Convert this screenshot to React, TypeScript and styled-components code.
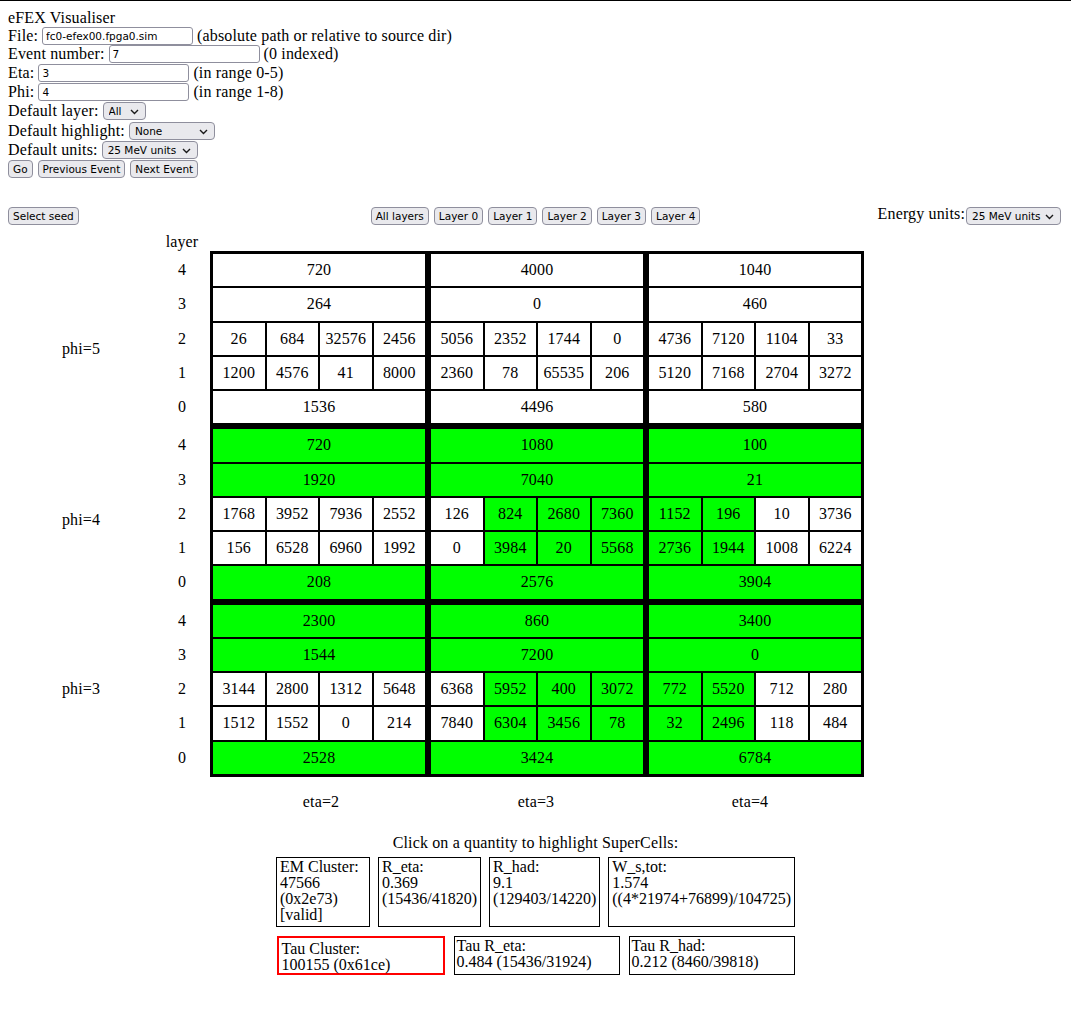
import React from 'react';
import styled, { createGlobalStyle } from 'styled-components';

const GlobalStyle = createGlobalStyle`
  html, body { margin: 0; padding: 0; background: #fff; }
  body {
    font-family: "Liberation Serif", "Times New Roman", serif;
    font-size: 16px;
    letter-spacing: 0.15px;
    color: #000;
  }
`;

const ui = `"DejaVu Sans", "Liberation Sans", sans-serif`;

const Page = styled.div`
  border-top: 1px solid #000;
  padding: 8px 8px 40px;
  width: 1071px;
  box-sizing: border-box;
`;

const Title = styled.div`
  height: 18px;
  line-height: 18px;
`;

const FormRow = styled.div<{ $h: number }>`
  display: flex;
  align-items: center;
  gap: 4px;
  height: ${(p) => p.$h}px;
  line-height: 18px;
  white-space: nowrap;
`;

const TextInput = styled.input`
  width: 151px;
  height: 18px;
  box-sizing: border-box;
  border: 1px solid #8f8f9d;
  border-radius: 3px;
  padding: 0 3px;
  font-family: ${ui};
  font-size: 10.5px;
  letter-spacing: 0;
  color: #000;
  background: #fff;
  outline: none;
`;

const SelectWrap = styled.span<{ $w: number }>`
  position: relative;
  display: inline-flex;
  align-items: center;
  width: ${(p) => p.$w}px;
  height: 18px;
  box-sizing: border-box;
  border: 1px solid #8f8f9d;
  border-radius: 4px;
  background: #e9e9ed;
`;

const NativeSelect = styled.select`
  appearance: none;
  -webkit-appearance: none;
  border: 0;
  background: transparent;
  width: 100%;
  height: 100%;
  padding: 0 0 0 5px;
  margin: 0;
  font-family: ${ui};
  font-size: 10.5px;
  letter-spacing: 0;
  color: #000;
  outline: none;
`;

const Chevron = styled.svg`
  position: absolute;
  right: 6px;
  top: 6px;
  pointer-events: none;
`;

const Button = styled.button`
  height: 18px;
  box-sizing: border-box;
  border: 1px solid #8f8f9d;
  border-radius: 4px;
  background: #e9e9ed;
  padding: 0 4px;
  margin: 0;
  font-family: ${ui};
  font-size: 10.5px;
  letter-spacing: 0;
  color: #000;
  line-height: 16px;
`;

const ButtonRow = styled.div`
  display: flex;
  align-items: center;
  gap: 5px;
  height: 20px;
`;

const Toolbar = styled.div`
  display: grid;
  grid-template-columns: 1fr auto 1fr;
  align-items: center;
  height: 18px;
  margin-top: 26px;
`;

const ToolGroup = styled.div<{ $align: 'start' | 'center' | 'end' }>`
  display: flex;
  align-items: center;
  gap: 5px;
  justify-self: ${(p) => p.$align};
  margin-right: ${(p) => (p.$align === 'end' ? '2px' : '0')};
`;

const UnitsLabel = styled.span`
  line-height: 18px;
  margin-right: -4px;
  margin-bottom: 4px;
`;

const Grid = styled.div`
  display: grid;
  grid-template-columns: 146px 56px max-content;
  margin-top: 10px;
`;

const HeadCell = styled.div`
  height: 18px;
  line-height: 18px;
  text-align: center;
`;

const SideColumn = styled.div`
  display: flex;
  flex-direction: column;
  gap: 6px;
  padding: 3px 0;
`;

const PhiSlot = styled.div`
  height: 169.25px;
  display: flex;
  align-items: center;
  justify-content: center;
`;

const PhiLabel = styled.span<{ $shift: number }>`
  margin-top: ${(p) => p.$shift * 2}px;
  line-height: 18px;
`;

const LayerBlock = styled.div`
  display: grid;
  grid-template-rows: repeat(5, 32.25px);
  row-gap: 2px;
`;

const LayerNum = styled.div`
  display: flex;
  align-items: center;
  justify-content: center;
`;

const Table = styled.div`
  display: grid;
  grid-template-columns: repeat(3, 212px);
  gap: 6px;
  padding: 3px;
  background: #000;
`;

const Block = styled.div`
  display: grid;
  grid-template-rows: repeat(5, 32.25px);
  row-gap: 2px;
`;

const CellRow = styled.div<{ $n: number }>`
  display: grid;
  grid-template-columns: repeat(${(p) => p.$n}, 1fr);
  column-gap: 2px;
`;

const Cell = styled.div<{ $on: boolean }>`
  background: ${(p) => (p.$on ? '#00ff00' : '#ffffff')};
  display: flex;
  align-items: center;
  justify-content: center;
  cursor: pointer;
`;

const EtaRow = styled.div`
  display: grid;
  grid-template-columns: repeat(3, 212px);
  column-gap: 6px;
  padding: 16px 3px 0;
`;

const EtaLabel = styled.div<{ $dx: number }>`
  text-align: center;
  line-height: 18px;
  margin-left: ${(p) => p.$dx}px;
`;

const Caption = styled.div`
  text-align: center;
  line-height: 18px;
  margin-top: 23px;
`;

const BoxRow = styled.div<{ $gap: number; $top: number }>`
  display: flex;
  justify-content: center;
  align-items: stretch;
  gap: ${(p) => p.$gap}px;
  margin-top: ${(p) => p.$top}px;
`;

const QBox = styled.div<{ $w?: number; $red?: boolean; $pad: string; $h?: number }>`
  box-sizing: border-box;
  ${(p) => (p.$w ? `width: ${p.$w}px;` : '')}
  ${(p) => (p.$h ? `height: ${p.$h}px;` : '')}
  border: ${(p) => (p.$red ? '2px solid #ff0000' : '1px solid #000')};
  padding: ${(p) => p.$pad};
  line-height: 16px;
  letter-spacing: 0;
  white-space: nowrap;
  cursor: pointer;
`;

type Sel = { w: number; value: string; options: string[] };

const Select: React.FC<Sel> = ({ w, value, options }) => (
  <SelectWrap $w={w}>
    <NativeSelect defaultValue={value}>
      {options.map((o) => (
        <option key={o} value={o}>
          {o}
        </option>
      ))}
    </NativeSelect>
    <Chevron width="9" height="6" viewBox="0 0 9 6">
      <path d="M1 1 L4.5 4.5 L8 1" fill="none" stroke="#1a1a1a" strokeWidth="1.4" />
    </Chevron>
  </SelectWrap>
);

const data: string[][][] = [
  [
    ['720', '264', '26 684 32576 2456', '1200 4576 41 8000', '1536'],
    ['4000', '0', '5056 2352 1744 0', '2360 78 65535 206', '4496'],
    ['1040', '460', '4736 7120 1104 33', '5120 7168 2704 3272', '580'],
  ],
  [
    ['720*', '1920*', '1768 3952 7936 2552', '156 6528 6960 1992', '208*'],
    ['1080*', '7040*', '126 824* 2680* 7360*', '0 3984* 20* 5568*', '2576*'],
    ['100*', '21*', '1152* 196* 10 3736', '2736* 1944* 1008 6224', '3904*'],
  ],
  [
    ['2300*', '1544*', '3144 2800 1312 5648', '1512 1552 0 214', '2528*'],
    ['860*', '7200*', '6368 5952* 400* 3072*', '7840 6304* 3456* 78*', '3424*'],
    ['3400*', '0*', '772* 5520* 712 280', '32* 2496* 118 484', '6784*'],
  ],
];

const phis = [
  { label: 'phi=5', shift: 10.5 },
  { label: 'phi=4', shift: 6 },
  { label: 'phi=3', shift: 0 },
];

const etas = [
  { label: 'eta=2', dx: 4 },
  { label: 'eta=3', dx: -2 },
  { label: 'eta=4', dx: -10 },
];

const layers = [4, 3, 2, 1, 0];

export default function App() {
  return (
    <>
      <GlobalStyle />
      <Page>
        <Title>eFEX Visualiser</Title>
        <FormRow $h={18}>
          File: <TextInput defaultValue="fc0-efex00.fpga0.sim" /> (absolute path or relative to source dir)
        </FormRow>
        <FormRow $h={18}>
          Event number: <TextInput defaultValue="7" /> (0 indexed)
        </FormRow>
        <FormRow $h={19}>
          Eta: <TextInput defaultValue="3" /> (in range 0-5)
        </FormRow>
        <FormRow $h={19}>
          Phi: <TextInput defaultValue="4" /> (in range 1-8)
        </FormRow>
        <FormRow $h={20}>
          Default layer: <Select w={43} value="All" options={['All', '0', '1', '2', '3', '4']} />
        </FormRow>
        <FormRow $h={19}>
          Default highlight: <Select w={86} value="None" options={['None', 'EM Cluster', 'Tau Cluster']} />
        </FormRow>
        <FormRow $h={19}>
          Default units: <Select w={96} value="25 MeV units" options={['25 MeV units', 'MeV']} />
        </FormRow>
        <ButtonRow>
          <Button>Go</Button>
          <Button>Previous Event</Button>
          <Button>Next Event</Button>
        </ButtonRow>

        <Toolbar>
          <ToolGroup $align="start">
            <Button>Select seed</Button>
          </ToolGroup>
          <ToolGroup $align="center">
            <Button>All layers</Button>
            <Button>Layer 0</Button>
            <Button>Layer 1</Button>
            <Button>Layer 2</Button>
            <Button>Layer 3</Button>
            <Button>Layer 4</Button>
          </ToolGroup>
          <ToolGroup $align="end">
            <UnitsLabel>Energy units:</UnitsLabel>
            <Select w={95} value="25 MeV units" options={['25 MeV units', 'MeV']} />
          </ToolGroup>
        </Toolbar>

        <Grid>
          <div />
          <HeadCell>layer</HeadCell>
          <div />

          <SideColumn>
            {phis.map((p) => (
              <PhiSlot key={p.label}>
                <PhiLabel $shift={p.shift}>{p.label}</PhiLabel>
              </PhiSlot>
            ))}
          </SideColumn>
          <SideColumn>
            {phis.map((p) => (
              <LayerBlock key={p.label}>
                {layers.map((l) => (
                  <LayerNum key={l}>{l}</LayerNum>
                ))}
              </LayerBlock>
            ))}
          </SideColumn>
          <Table>
            {data.map((phiRow, pi) =>
              phiRow.map((block, ei) => (
                <Block key={`${pi}-${ei}`}>
                  {block.map((row, ri) => {
                    const cells = row.split(' ');
                    return (
                      <CellRow key={ri} $n={cells.length}>
                        {cells.map((c, ci) => (
                          <Cell key={ci} $on={c.endsWith('*')}>
                            {c.replace('*', '')}
                          </Cell>
                        ))}
                      </CellRow>
                    );
                  })}
                </Block>
              ))
            )}
          </Table>

          <div />
          <div />
          <EtaRow>
            {etas.map((e) => (
              <EtaLabel key={e.label} $dx={e.dx}>
                {e.label}
              </EtaLabel>
            ))}
          </EtaRow>
        </Grid>

        <Caption>Click on a quantity to highlight SuperCells:</Caption>
        <BoxRow $gap={8} $top={5}>
          <QBox $w={94} $pad="1px 3px 3px">
            EM Cluster:
            <br />
            47566
            <br />
            (0x2e73)
            <br />
            [valid]
          </QBox>
          <QBox $pad="1px 3px 3px">
            R_eta:
            <br />
            0.369
            <br />
            (15436/41820)
          </QBox>
          <QBox $pad="1px 3px 3px">
            R_had:
            <br />
            9.1
            <br />
            (129403/14220)
          </QBox>
          <QBox $pad="1px 3px 3px">
            W_s,tot:
            <br />
            1.574
            <br />
            ((4*21974+76899)/104725)
          </QBox>
        </BoxRow>
        <BoxRow $gap={9} $top={9}>
          <QBox $w={168} $h={39} $red $pad="3px 3px 0">
            Tau Cluster:
            <br />
            100155 (0x61ce)
          </QBox>
          <QBox $w={166} $h={39} $pad="1px 2px 0">
            Tau R_eta:
            <br />
            0.484 (15436/31924)
          </QBox>
          <QBox $w={166} $h={39} $pad="1px 2px 0">
            Tau R_had:
            <br />
            0.212 (8460/39818)
          </QBox>
        </BoxRow>
      </Page>
    </>
  );
}
